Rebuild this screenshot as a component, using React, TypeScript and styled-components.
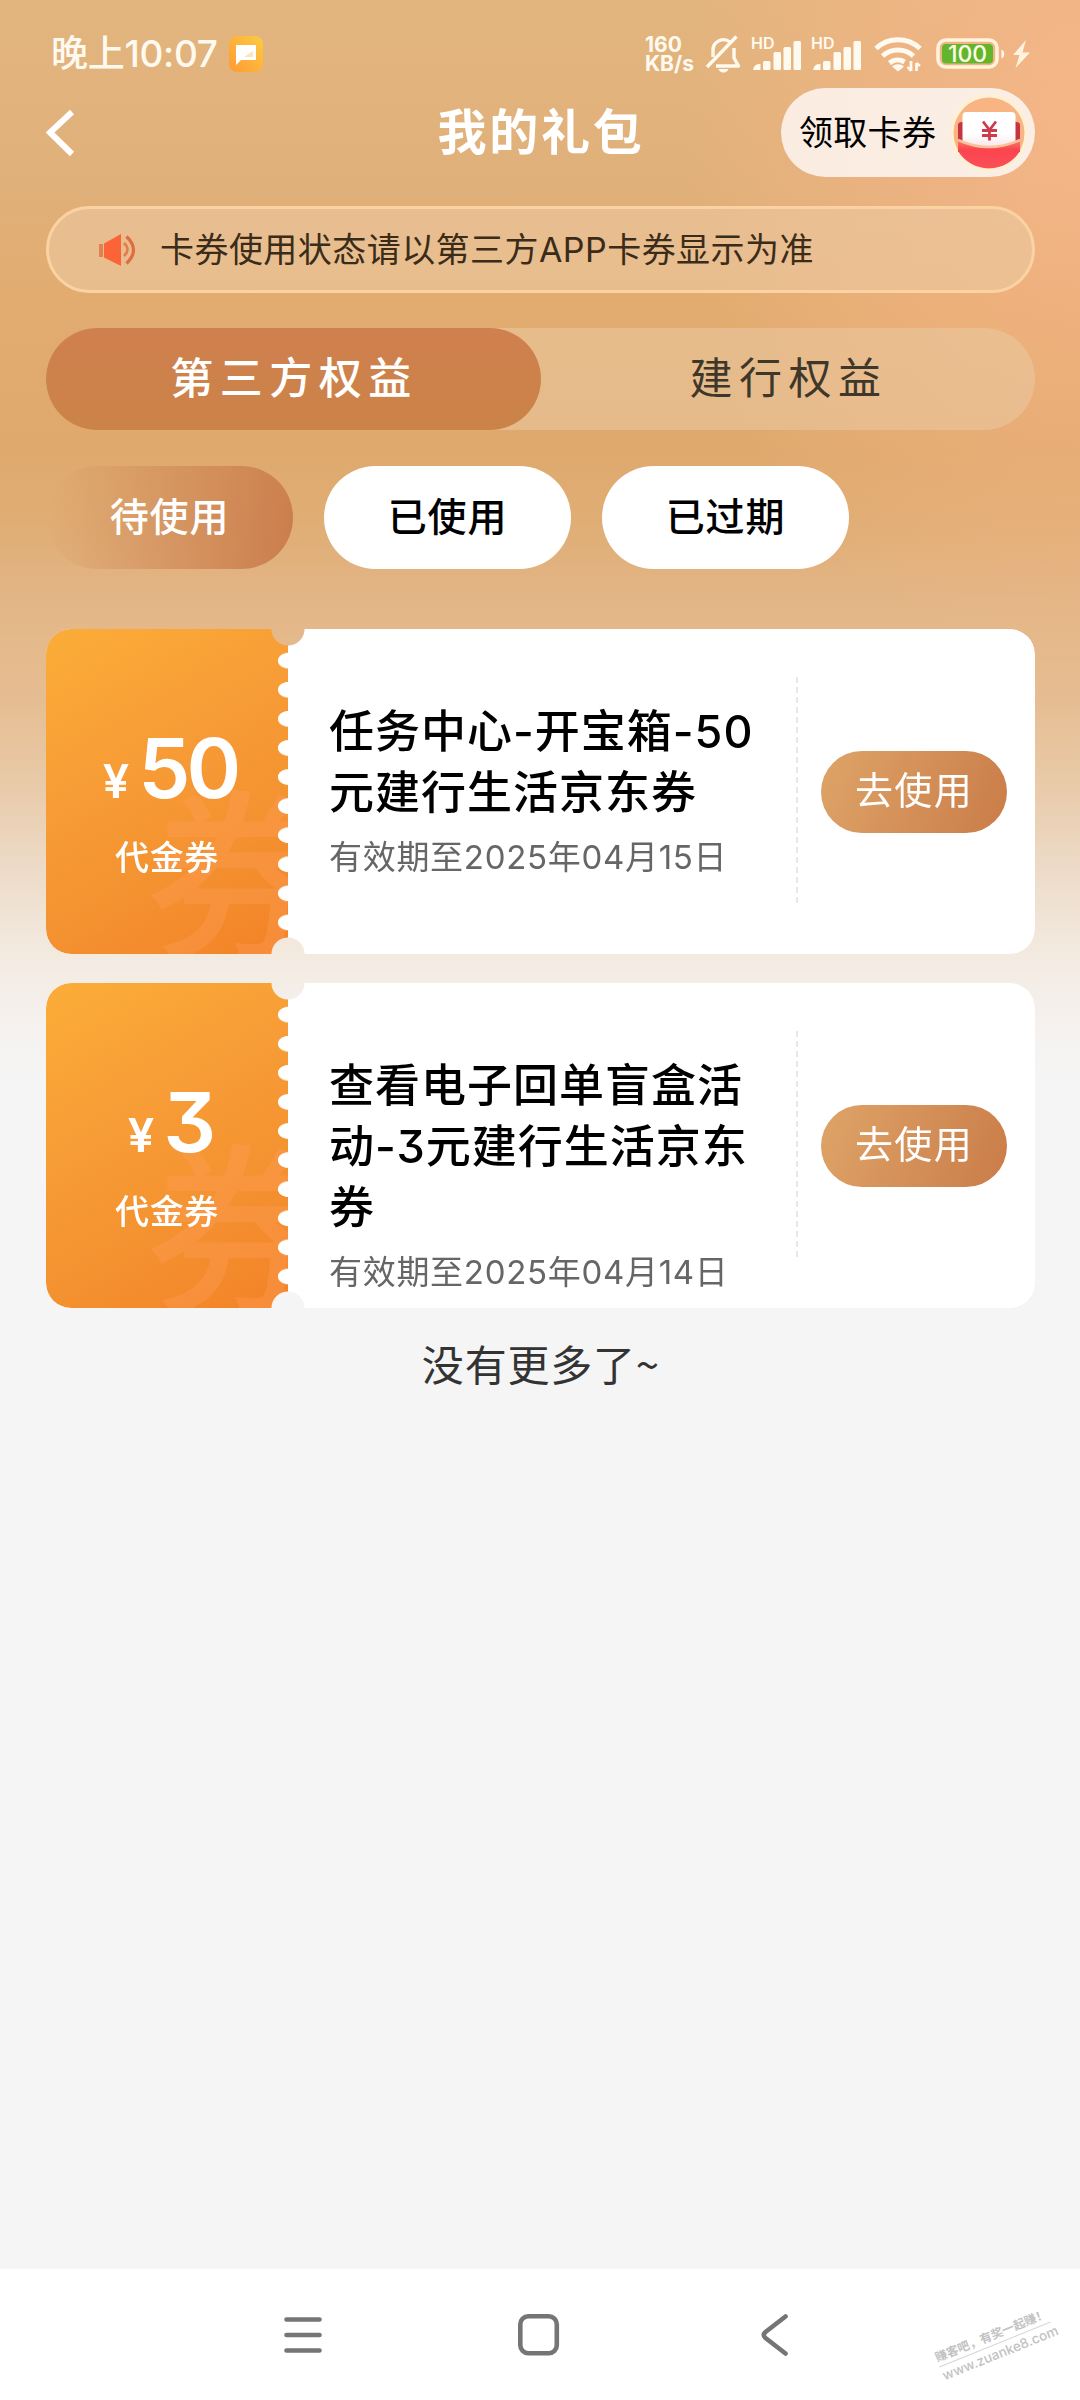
import React from "react";
import styled, { createGlobalStyle, css } from "styled-components";

const GlobalStyle = createGlobalStyle`
  *, *::before, *::after { box-sizing: border-box; }
  body {
    margin: 0;
    background: #f5f5f5;
    font-family: Inter, "Noto Sans CJK SC", sans-serif;
    font-feature-settings: "cv09" 1;
    color: #000;
  }
`;

const Page = styled.div`
  position: relative;
  display: flex;
  flex-direction: column;
  width: 1080px;
  height: 2400px;
  overflow: hidden;
  background:
    radial-gradient(ellipse 400px 560px at 100% 5%, rgba(250, 182, 138, 0.8), rgba(250, 182, 138, 0) 100%),
    linear-gradient(180deg, #e3b57e 0, #e0b07a 190px, #e2ac70 300px, #dfa96d 450px, #e0ae76 530px, #e3b686 600px, #e6bd92 700px, #e9cbaa 790px, #eddbc8 870px, #f2e8dc 940px, #f4ede6 980px, #f5f2f0 1030px, #f5f5f5 1080px);
`;

/* ---------- status bar ---------- */

const StatusBar = styled.div`
  display: flex;
  align-items: center;
  height: 88px;
  padding: 20px 49px 0 51px;
  color: #fffaf0;
`;

const Clock = styled.div`
  font-size: 37px;
  line-height: 44px;
  font-weight: 500;
  letter-spacing: -0.3px;
  white-space: nowrap;
`;

const AppBadge = styled.svg`
  margin-left: 11px;
`;

const StatusIcons = styled.div`
  display: flex;
  align-items: center;
  margin-left: auto;
`;

const NetSpeed = styled.div`
  width: 48px;
  margin-right: 12px;
  font-size: 21px;
  line-height: 19px;
  font-weight: 700;
  white-space: nowrap;
`;

/* ---------- header ---------- */

const Header = styled.header`
  display: grid;
  grid-template-columns: 1fr auto 1fr;
  align-items: center;
  height: 89px;
  padding: 0 45px;
`;

const Title = styled.h1`
  margin: 0;
  padding-left: 2px;
  font-size: 49px;
  line-height: 60px;
  font-weight: 600;
  letter-spacing: 2.7px;
  color: #fff;
`;

const ClaimButton = styled.button`
  display: flex;
  align-items: center;
  justify-content: space-between;
  justify-self: end;
  width: 254px;
  height: 89px;
  padding: 0 7px 0 18px;
  border: 0;
  border-radius: 45px;
  background: linear-gradient(90deg, #faece0, #fbeee5);
  font: inherit;
  font-size: 34px;
  line-height: 44px;
  letter-spacing: 0.3px;
  color: #000;
`;

/* ---------- notice ---------- */

const Main = styled.main`
  display: flex;
  flex-direction: column;
  flex: 1;
  padding: 29px 45px 0 46px;
`;

const Notice = styled.div`
  display: flex;
  align-items: center;
  gap: 24px;
  height: 87px;
  padding-left: 49px;
  border: 3px solid #fbd3a3;
  border-radius: 44px;
  background: rgba(236, 200, 160, 0.62);
  font-size: 34px;
  line-height: 44px;
  letter-spacing: 0.45px;
  color: #3b2c1a;
  white-space: nowrap;
`;

/* ---------- tabs ---------- */

const Tabs = styled.div`
  display: grid;
  grid-template-columns: 495px 1fr;
  height: 102px;
  margin-top: 35px;
  border-radius: 51px;
  background: rgba(235, 200, 160, 0.58);
`;

const Tab = styled.div<{ $active?: boolean }>`
  display: flex;
  align-items: center;
  justify-content: center;
  padding: 0 0 3px 1px;
  border-radius: 51px;
  font-size: 43px;
  line-height: 56px;
  letter-spacing: 6.5px;
  color: #40372b;
  ${(p) =>
    p.$active &&
    css`
      background: linear-gradient(180deg, #d0804e, #cb8348);
      color: #fff;
      font-weight: 500;
    `}
`;

const Filters = styled.div`
  display: flex;
  gap: 31px;
  margin-top: 36px;
`;

const Filter = styled.div<{ $active?: boolean }>`
  display: flex;
  align-items: center;
  justify-content: center;
  width: 247px;
  height: 103px;
  padding-bottom: 2px;
  border-radius: 52px;
  font-size: 39px;
  line-height: 52px;
  font-weight: 500;
  letter-spacing: 0.8px;
  background: ${(p) =>
    p.$active ? "linear-gradient(100deg, rgba(223, 170, 110, 0) 4%, #cc7f4e 96%)" : "#fff"};
  color: ${(p) => (p.$active ? "#fff" : "#000")};
`;

/* ---------- coupons ---------- */

const CouponList = styled.div`
  display: flex;
  flex-direction: column;
  gap: 29px;
  margin-top: 60px;
`;

const Coupon = styled.article`
  display: flex;
  height: 325px;
  border-radius: 25px;
  background: #fff;
  overflow: hidden;
  mask-image: radial-gradient(circle at 242px 0, transparent 16px, #000 17px),
    radial-gradient(circle at 242px 325px, transparent 16px, #000 17px);
  mask-composite: intersect;
`;

const Stub = styled.div`
  position: relative;
  display: flex;
  flex-direction: column;
  align-items: center;
  flex: none;
  width: 242px;
  padding-top: 97px;
  overflow: hidden;
  background: linear-gradient(150deg, #fbad38 0%, #f79c36 40%, #f49331 65%, #f38227 100%);
  color: #fff;
  mask-image: radial-gradient(ellipse 10.5px 8px at 100% 50%, transparent 92%, #000 100%);
  mask-size: 100% 29.1px;
  mask-position: 0 17.1px;
`;

const Watermark = styled.span`
  position: absolute;
  left: 99px;
  top: 150px;
  font-size: 184px;
  line-height: 200px;
  font-weight: 500;
  color: rgba(255, 158, 92, 0.34);
`;

const Amount = styled.div`
  position: relative;
  display: flex;
  align-items: baseline;
  gap: 9px;
  height: 84px;
  padding-left: 6px;
  line-height: 84px;
  font-weight: 600;
`;

const Currency = styled.span`
  font-size: 47px;
  line-height: 44px;
`;

const Value = styled.span`
  font-size: 83px;
  letter-spacing: -4px;
`;

const Kind = styled.div`
  position: relative;
  margin-top: 26px;
  font-size: 34px;
  line-height: 44px;
  font-weight: 500;
  letter-spacing: 0.6px;
`;

const Info = styled.div`
  width: 446px;
  padding: 72px 0 0 41px;
`;

const CouponTitle = styled.h2`
  margin: 0;
  font-size: 45px;
  line-height: 61px;
  font-weight: 500;
  letter-spacing: 1px;
  margin-right: -30px;
`;

const Expiry = styled.div`
  margin-top: 12px;
  font-size: 33px;
  line-height: 44px;
  letter-spacing: 0.7px;
  color: #666;
  white-space: nowrap;
`;

const Divider = styled.div`
  flex: none;
  width: 2px;
  height: 228px;
  margin: 48px 0 0 62px;
  background: repeating-linear-gradient(180deg, #e8e8e8 0 6px, transparent 6px 10px);
`;

const UseButton = styled.button`
  flex: none;
  align-self: center;
  width: 186px;
  height: 82px;
  margin-left: 23px;
  padding: 0 0 4px;
  border: 0;
  border-radius: 41px;
  background: linear-gradient(110deg, #dea468, #ca7c48);
  font: inherit;
  font-size: 38px;
  line-height: 50px;
  letter-spacing: 1.3px;
  color: #fff;
`;

const EndNote = styled.p`
  margin: 30px 0 0;
  text-align: center;
  font-size: 42px;
  line-height: 56px;
  letter-spacing: 0.8px;
  color: #333;
`;

const Tilde = styled.span`
  font-family: "Noto Sans CJK SC", sans-serif;
  line-height: 40px;
  letter-spacing: 0;
`;

/* ---------- navigation ---------- */

const NavBar = styled.nav`
  position: relative;
  display: flex;
  align-items: center;
  justify-content: center;
  gap: 190px;
  height: 131px;
  padding-right: 2px;
  background: #fff;
`;

const SiteMark = styled.div`
  position: absolute;
  left: 935px;
  top: 57px;
  width: 120px;
  transform: rotate(-22deg);
  font-size: 13.5px;
  line-height: 18px;
  font-weight: 500;
  color: #c2c2c2;
  white-space: nowrap;
`;

const SiteSlogan = styled.div`
  font-size: 12px;
  font-weight: 700;
  border-bottom: 1px solid #d4d4d4;
`;

/* ---------- icons ---------- */

const MessageBadge = () => (
  <AppBadge width="34" height="36" viewBox="0 0 34 36">
    <defs>
      <linearGradient id="badge" x1="0" y1="1" x2="1" y2="0">
        <stop offset="0" stopColor="#ff9a33" />
        <stop offset="1" stopColor="#fccb44" />
      </linearGradient>
    </defs>
    <rect width="34" height="36" rx="8" fill="url(#badge)" />
    <path d="M7 9h20v15H12l-5 5z" fill="#fff" />
    <path d="M24 15v6h-9z" fill="#fde3b8" />
  </AppBadge>
);

const BellOff = () => (
  <svg width="36" height="38" viewBox="0 0 36 38" fill="none" stroke="#fffaf0" strokeWidth="3.4" strokeLinejoin="round">
    <path d="M8 22V15a10.500 10.500 0 0 1 17-8" />
    <path d="M29 13v10l4.500 8H11" />
    <path d="M31.500 1.500L2 32" />
    <path d="M13.500 34h10c-1 2.600-3 3.600-5 3.600s-4-1-5-3.600z" fill="#fffaf0" stroke="none" />
  </svg>
);

const Signal = () => (
  <svg width="51" height="40" viewBox="0 0 51 40" fill="#fffaf0">
    <text x="0" y="15" fontSize="16" fontWeight="600" fontFamily="Inter, sans-serif">HD</text>
    <path d="M2 36a6.500 6.500 0 0 1 7.500-6v6z" />
    <rect x="12" y="27" width="7.500" height="9" rx="1.500" />
    <rect x="22.500" y="18" width="7.500" height="18" rx="1.500" />
    <rect x="32.500" y="13" width="7.500" height="23" rx="1.500" />
    <rect x="42.500" y="7" width="7.500" height="29" rx="1.500" />
  </svg>
);

const Wifi = () => (
  <svg width="48" height="36" viewBox="0 0 48 36" fill="none" stroke="#fffaf0" strokeWidth="5">
    <path d="M2 12.500a32 32 0 0 1 44 0" />
    <path d="M8.500 20a23 23 0 0 1 31 0" />
    <path d="M15.500 27a13 13 0 0 1 15-1" />
    <path d="M24 35.500l-6-5a9 9 0 0 1 12 0z" fill="#fffaf0" stroke="none" />
    <path d="M37 25v10M42.500 27v8" strokeWidth="2.800" />
    <path d="M33.500 31l3.500 4M46 30l-3.500-3" strokeWidth="2.400" />
  </svg>
);

const Battery = () => (
  <svg width="95" height="32" viewBox="0 0 95 32">
    <rect x="2" y="2" width="59" height="27" rx="8" fill="none" stroke="#fff3dc" strokeWidth="3.600" />
    <rect x="6" y="6" width="51" height="19.500" rx="4" fill="#63b62c" />
    <path d="M65.500 11.500a5 5 0 0 1 0 9z" fill="#fffaf0" />
    <text x="31.500" y="24" textAnchor="middle" fontSize="23" fontWeight="500" fill="#fffbe8" fontFamily="Inter, sans-serif">100</text>
    <path d="M90 2L77 17h6.500l-4 13L94 14.500h-7.500z" fill="#fff3e0" />
  </svg>
);

const BackChevron = () => (
  <svg width="30" height="48" viewBox="0 0 30 48" fill="none" stroke="#fff" strokeWidth="6">
    <path d="M27 3L5 23.500 27 45" />
  </svg>
);

const RedPacket = () => (
  <svg width="78" height="78" viewBox="0 0 78 78">
    <defs>
      <linearGradient id="packet" x1="0" y1="0" x2="0" y2="1">
        <stop offset="0" stopColor="#ff7a62" />
        <stop offset="0.35" stopColor="#fb4450" />
        <stop offset="1" stopColor="#fb5058" />
      </linearGradient>
      <linearGradient id="bill" x1="0" y1="0" x2="0" y2="1">
        <stop offset="0.6" stopColor="#fff" />
        <stop offset="1" stopColor="#fde3e8" />
      </linearGradient>
    </defs>
    <circle cx="39" cy="39" r="39" fill="#fff0d4" />
    <circle cx="39" cy="39" r="35.500" fill="#f8b482" />
    <path d="M8 31q0-3 4-3h54q4 0 4 3v27H8z" fill="#c83340" />
    <rect x="12.500" y="18" width="53" height="36" rx="4" fill="url(#bill)" />
    <path d="M8 46q31 14 62 0v11A36.500 36.500 0 0 1 8 57z" fill="url(#packet)" />
    <path d="M8 46q31 14 62 0" fill="none" stroke="#f9c39a" strokeWidth="2.500" />
    <path d="M33 27.500l6.500 8.500 6.500-8.500M39.500 35v11.500M32 36.500h15M32 41.500h15" fill="none" stroke="#cf3b4d" strokeWidth="2.800" />
  </svg>
);

const Speaker = () => (
  <svg width="38" height="34" viewBox="0 0 38 34">
    <path d="M1 11h4v13H1z" fill="#e08155" />
    <path d="M6 10.500L23 1v32L6 24.500z" fill="#fc6337" />
    <path d="M26 10q7 6.500 0 13" fill="none" stroke="#e87a4c" strokeWidth="2.600" />
    <path d="M28.500 3.500q14 13.500 0 27" fill="none" stroke="#e06c42" strokeWidth="3.200" />
  </svg>
);

const MenuIcon = () => (
  <svg width="46" height="46" viewBox="0 0 46 46" stroke="#757575" strokeWidth="4.600" strokeLinecap="round">
    <path d="M6.500 7.500h33M6.500 23h33M6.500 38.500h33" />
  </svg>
);

const HomeIcon = () => (
  <svg width="46" height="46" viewBox="0 0 46 46" fill="none" stroke="#757575" strokeWidth="4.600">
    <rect x="4.300" y="4.300" width="36.500" height="37" rx="8" />
  </svg>
);

const NavBackIcon = () => (
  <svg width="46" height="46" viewBox="0 0 46 46" fill="none" stroke="#757575" strokeWidth="4.600" strokeLinecap="round">
    <path d="M33.500 4.500L13.500 20q-3.500 3 0 6l20 15.500" />
  </svg>
);

/* ---------- data ---------- */

const filters = ["待使用", "已使用", "已过期"];

const coupons = [
  { value: "50", title: "任务中心-开宝箱-50元建行生活京东券", expiry: "有效期至2025年04月15日" },
  { value: "3", title: "查看电子回单盲盒活动-3元建行生活京东券", expiry: "有效期至2025年04月14日" },
];

const SignalPair = styled.div`
  display: flex;
  gap: 9px;
  margin: 0 12px 0 10px;
`;

const BatterySlot = styled.div`
  display: flex;
  margin-left: 14px;
`;

export default function App() {
  return (
    <>
      <GlobalStyle />
      <Page>
        <StatusBar>
          <Clock>晚上10:07</Clock>
          <MessageBadge />
          <StatusIcons>
            <NetSpeed>
              160
              <br />
              KB/s
            </NetSpeed>
            <BellOff />
            <SignalPair>
              <Signal />
              <Signal />
            </SignalPair>
            <Wifi />
            <BatterySlot>
              <Battery />
            </BatterySlot>
          </StatusIcons>
        </StatusBar>
        <Header>
          <BackChevron />
          <Title>我的礼包</Title>
          <ClaimButton>
            领取卡券
            <RedPacket />
          </ClaimButton>
        </Header>
        <Main>
          <Notice>
            <Speaker />
            卡券使用状态请以第三方APP卡券显示为准
          </Notice>
          <Tabs>
            <Tab $active>第三方权益</Tab>
            <Tab>建行权益</Tab>
          </Tabs>
          <Filters>
            {filters.map((name, i) => (
              <Filter key={name} $active={i === 0}>
                {name}
              </Filter>
            ))}
          </Filters>
          <CouponList>
            {coupons.map((c) => (
              <Coupon key={c.value}>
                <Stub>
                  <Watermark>券</Watermark>
                  <Amount>
                    <Currency>¥</Currency>
                    <Value>{c.value}</Value>
                  </Amount>
                  <Kind>代金券</Kind>
                </Stub>
                <Info>
                  <CouponTitle>{c.title}</CouponTitle>
                  <Expiry>{c.expiry}</Expiry>
                </Info>
                <Divider />
                <UseButton>去使用</UseButton>
              </Coupon>
            ))}
          </CouponList>
          <EndNote>
            没有更多了<Tilde>~</Tilde>
          </EndNote>
        </Main>
        <NavBar>
          <MenuIcon />
          <HomeIcon />
          <NavBackIcon />
          <SiteMark>
            <SiteSlogan>赚客吧，有奖一起赚！</SiteSlogan>
            www.zuanke8.com
          </SiteMark>
        </NavBar>
      </Page>
    </>
  );
}
